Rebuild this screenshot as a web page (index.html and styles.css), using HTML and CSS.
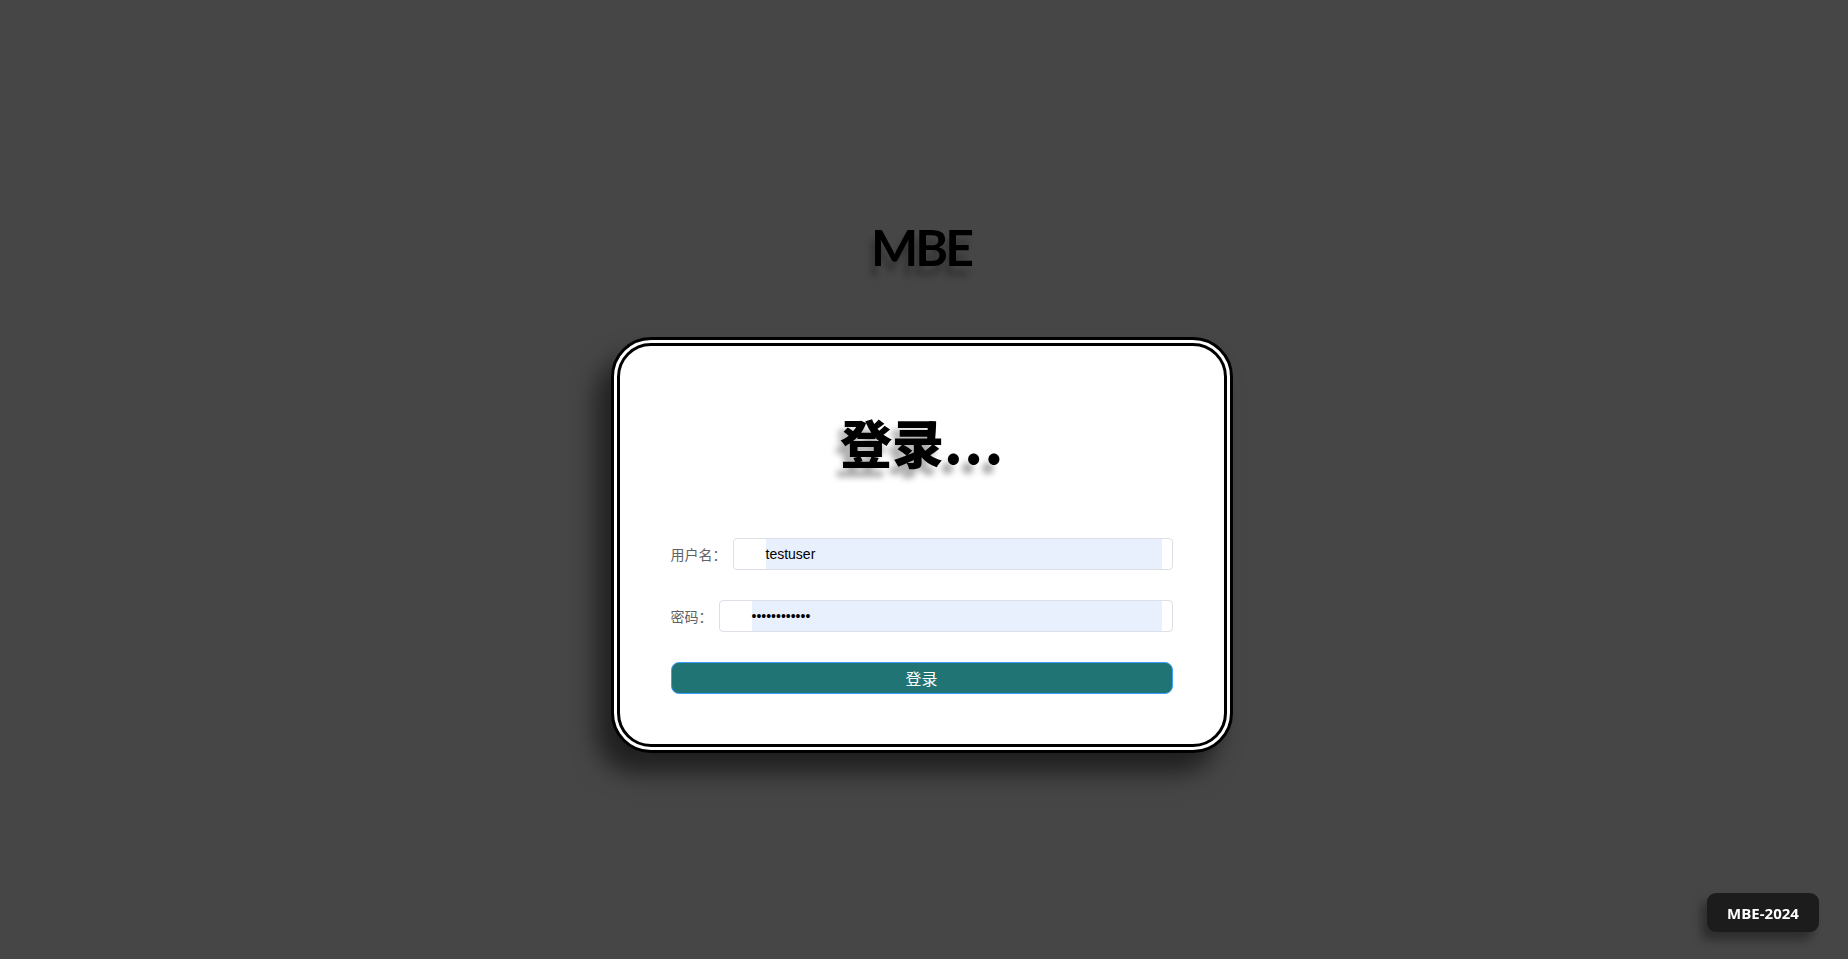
FILE: index.html
```html
<!DOCTYPE html>
<html lang="zh">
<head>
<meta charset="utf-8">
<title>MBE 登录</title>
<link rel="stylesheet" href="styles.css">
</head>
<body>
<main class="page">
  <h1 class="brand">MBE</h1>
  <section class="card">
    <h2 class="card-title">登录<span class="ellipsis">...</span></h2>
    <form class="form">
      <div class="row">
        <label class="label">用户名：</label>
        <div class="field"><span class="fill">testuser</span></div>
      </div>
      <div class="row">
        <label class="label">密码：</label>
        <div class="field"><span class="fill dots">••••••••••••</span></div>
      </div>
      <button type="button" class="btn">登录</button>
    </form>
  </section>
</main>
<div class="badge">MBE-2024</div>
</body>
</html>
```
FILE: styles.css
```css
html, body {
  margin: 0;
  padding: 0;
  height: 100%;
}
body {
  background: #464646;
  font-family: "Liberation Sans", "Noto Sans CJK SC", sans-serif;
}
.page {
  box-sizing: border-box;
  height: 100%;
  padding-top: 10px;
  display: flex;
  flex-direction: column;
  align-items: center;
  justify-content: center;
}
.brand {
  margin: 0 6px 60px 0;
  font-family: "Lato", "Liberation Sans", sans-serif;
  font-weight: 700;
  font-size: 50px;
  line-height: 60px;
  letter-spacing: -3px;
  color: #000;
  text-shadow: -4px 10px 6px rgba(0, 0, 0, 0.25);
}
.card {
  width: 502px;
  padding: 50px 51px;
  margin-right: 5px;
  background: #fff;
  border: 9px double #000;
  border-radius: 40px;
  box-shadow: -15px 20px 25px rgba(0, 0, 0, 0.55);
}
.card-title {
  margin: 16px 0 66px;
  text-align: center;
  font-family: "Noto Sans CJK SC", sans-serif;
  font-weight: 900;
  font-size: 52px;
  line-height: 60px;
  color: #000;
  text-shadow: -6px 9px 6px rgba(0, 0, 0, 0.35);
}
.ellipsis {
  letter-spacing: 2px;
  margin-right: -2px;
}
.form {
  display: flex;
  flex-direction: column;
  gap: 30px;
}
.row {
  display: flex;
  align-items: center;
  gap: 6px;
}
.label {
  font-family: "Noto Sans CJK SC", sans-serif;
  font-size: 14px;
  color: #606266;
  white-space: nowrap;
}
.field {
  flex: 1;
  height: 30px;
  border: 1px solid #dcdfe6;
  border-radius: 4px;
  background: #fff;
  padding: 0 10px 0 32px;
  display: flex;
}
.fill {
  flex: 1;
  background: #e8f0fe;
  display: flex;
  align-items: center;
  font-family: "Liberation Sans", sans-serif;
  font-size: 14px;
  color: #000;
}
.dots {
  font-size: 14px;
}
.btn {
  height: 32px;
  width: 100%;
  border: 1px solid #409eff;
  border-radius: 8px;
  background: #207574;
  color: #fff;
  font-family: "Noto Sans CJK SC", sans-serif;
  font-size: 16px;
  cursor: pointer;
}
.badge {
  position: fixed;
  right: 29px;
  bottom: 27px;
  width: 112px;
  height: 39px;
  display: flex;
  align-items: center;
  justify-content: center;
  background: #1c1c1c;
  border-radius: 9px;
  color: #fff;
  font-family: "Open Sans", sans-serif;
  font-weight: 700;
  font-size: 15px;
  box-shadow: -6px 8px 10px rgba(0, 0, 0, 0.35);
}
```
